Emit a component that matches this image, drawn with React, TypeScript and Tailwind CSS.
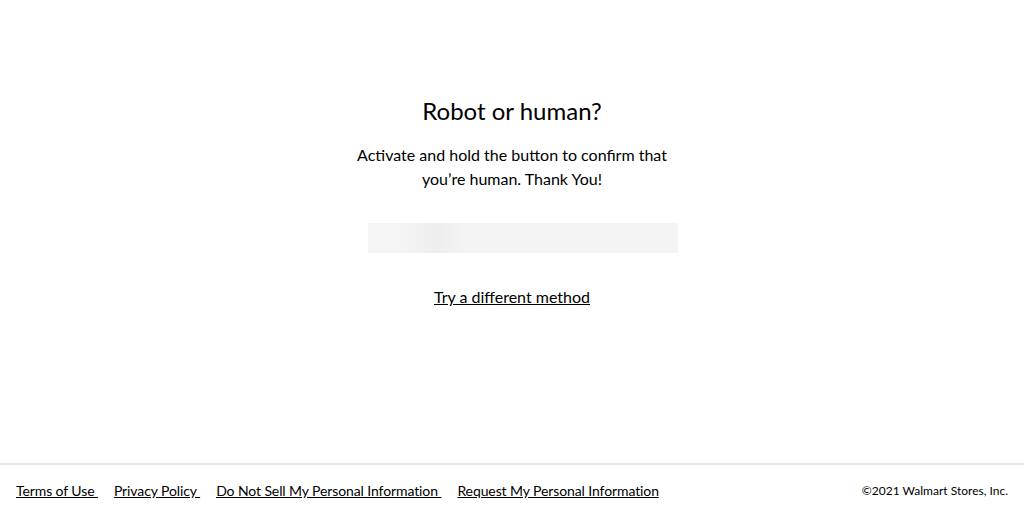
import React from "react";

const footerLinks = [
  "Terms of Use ",
  "Privacy Policy ",
  "Do Not Sell My Personal Information ",
  "Request My Personal Information",
];

const App = () => {
  return (
    <div
      className="h-screen flex flex-col bg-white text-[#2e2f32]"
      style={{ fontFamily: "Lato, 'Open Sans', sans-serif" }}
    >
      <main className="flex-1 flex flex-col items-center pt-[95px]">
        <h1 className="text-[24px] leading-[32px] font-normal text-black">Robot or human?</h1>
        <p className="mt-4 text-[16px] leading-[24px] text-center text-black">
          Activate and hold the button to confirm that
          <br />
          you’re human. Thank You!
        </p>
        <div className="mt-8 ml-[22px] w-[310px] h-[30px] bg-[linear-gradient(90deg,#f5f5f5_0%,#f5f5f5_10%,#eeeeee_22%,#f4f4f4_32%,#f4f4f4_100%)]" />
        <a href="#" className="mt-8 text-[16px] leading-[24px] underline text-black">
          Try a different method
        </a>
      </main>
      <footer className="h-[46px] border-t-2 border-[#e6e6e6] flex items-center justify-between px-4 pt-2">
        <div className="flex gap-4 text-[14px] leading-5 tracking-[-0.1px]">
          {footerLinks.map((l) => (
            <a key={l} href="#" className="underline text-black whitespace-pre">
              {l}
            </a>
          ))}
        </div>
        <span className="text-[12px] text-black">©2021 Walmart Stores, Inc.</span>
      </footer>
    </div>
  );
};

export default App;
